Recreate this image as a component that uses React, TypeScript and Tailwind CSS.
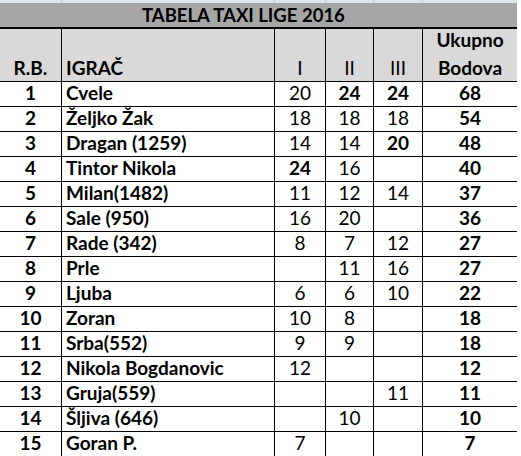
import React from "react";

const rows: { rb: string; name: string; v: [string, boolean][]; total: string }[] = [
  { rb: "1", name: "Cvele", v: [["20", false], ["24", true], ["24", true]], total: "68" },
  { rb: "2", name: "Željko Žak", v: [["18", false], ["18", false], ["18", false]], total: "54" },
  { rb: "3", name: "Dragan (1259)", v: [["14", false], ["14", false], ["20", true]], total: "48" },
  { rb: "4", name: "Tintor Nikola", v: [["24", true], ["16", false], ["", false]], total: "40" },
  { rb: "5", name: "Milan(1482)", v: [["11", false], ["12", false], ["14", false]], total: "37" },
  { rb: "6", name: "Sale (950)", v: [["16", false], ["20", false], ["", false]], total: "36" },
  { rb: "7", name: "Rade (342)", v: [["8", false], ["7", false], ["12", false]], total: "27" },
  { rb: "8", name: "Prle", v: [["", false], ["11", false], ["16", false]], total: "27" },
  { rb: "9", name: "Ljuba", v: [["6", false], ["6", false], ["10", false]], total: "22" },
  { rb: "10", name: "Zoran", v: [["10", false], ["8", false], ["", false]], total: "18" },
  { rb: "11", name: "Srba(552)", v: [["9", false], ["9", false], ["", false]], total: "18" },
  { rb: "12", name: "Nikola Bogdanovic", v: [["12", false], ["", false], ["", false]], total: "12" },
  { rb: "13", name: "Gruja(559)", v: [["", false], ["", false], ["11", false]], total: "11" },
  { rb: "14", name: "Šljiva (646)", v: [["", false], ["10", false], ["", false]], total: "10" },
  { rb: "15", name: "Goran P.", v: [["7", false], ["", false], ["", false]], total: "7" },
];

const cols = "grid grid-cols-[62px_213px_51px_48px_49px_94px]";

export default function App() {
  return (
    <div
      className="w-[521px] h-[456px] bg-white overflow-hidden text-black text-[19px]"
      style={{ fontFamily: "Lato, 'Noto Sans', sans-serif" }}
    >
      <div className="w-[517px]">
        <div className={`${cols} h-[3px] bg-[#dbe5f1]`}>
          <div className="border-r border-[#b8cce4]" />
          <div className="border-r border-[#b8cce4]" />
          <div className="border-r border-[#b8cce4]" />
          <div className="border-r border-[#b8cce4]" />
          <div className="border-r border-[#b8cce4]" />
          <div />
        </div>
        <div className="h-[26px] bg-[#a6a6a6] border-b-2 border-black flex items-end pl-[142px] pb-[3px] font-bold leading-none text-[18.5px]">
          TABELA TAXI LIGE 2016
        </div>
        <div className={`${cols} h-[53px] bg-[#d9d9d9] border-b border-black font-bold`}>
          <div className="border-r border-black flex items-end justify-center pb-[4px] leading-none">R.B.</div>
          <div className="border-r border-black flex items-end pl-[4px] pb-[4px] leading-none">IGRAČ</div>
          <div className="border-r border-black flex items-end justify-center pb-[4px] leading-none font-normal">I</div>
          <div className="border-r border-black flex items-end justify-center pb-[4px] leading-none font-normal">II</div>
          <div className="border-r border-black flex items-end justify-center pb-[4px] leading-none font-normal">III</div>
          <div className="flex flex-col items-center justify-end pb-[4px]">
            <span className="leading-none mb-[9px]">Ukupno</span>
            <span className="leading-none">Bodova</span>
          </div>
        </div>
        {rows.map((r) => (
          <div key={r.rb} className={`${cols} h-[25px] border-b border-black`}>
            <div className="border-r border-black flex items-end justify-center pb-[4px] leading-none font-bold">{r.rb}</div>
            <div className="border-r border-black flex items-end pl-[4px] pb-[4px] leading-none font-bold">{r.name}</div>
            {r.v.map(([val, b], i) => (
              <div
                key={i}
                className={`border-r border-black flex items-end justify-center pb-[4px] leading-none ${b ? "font-bold" : "font-normal"}`}
              >
                {val}
              </div>
            ))}
            <div className="flex items-end justify-center pb-[4px] leading-none font-bold">{r.total}</div>
          </div>
        ))}
      </div>
    </div>
  );
}
